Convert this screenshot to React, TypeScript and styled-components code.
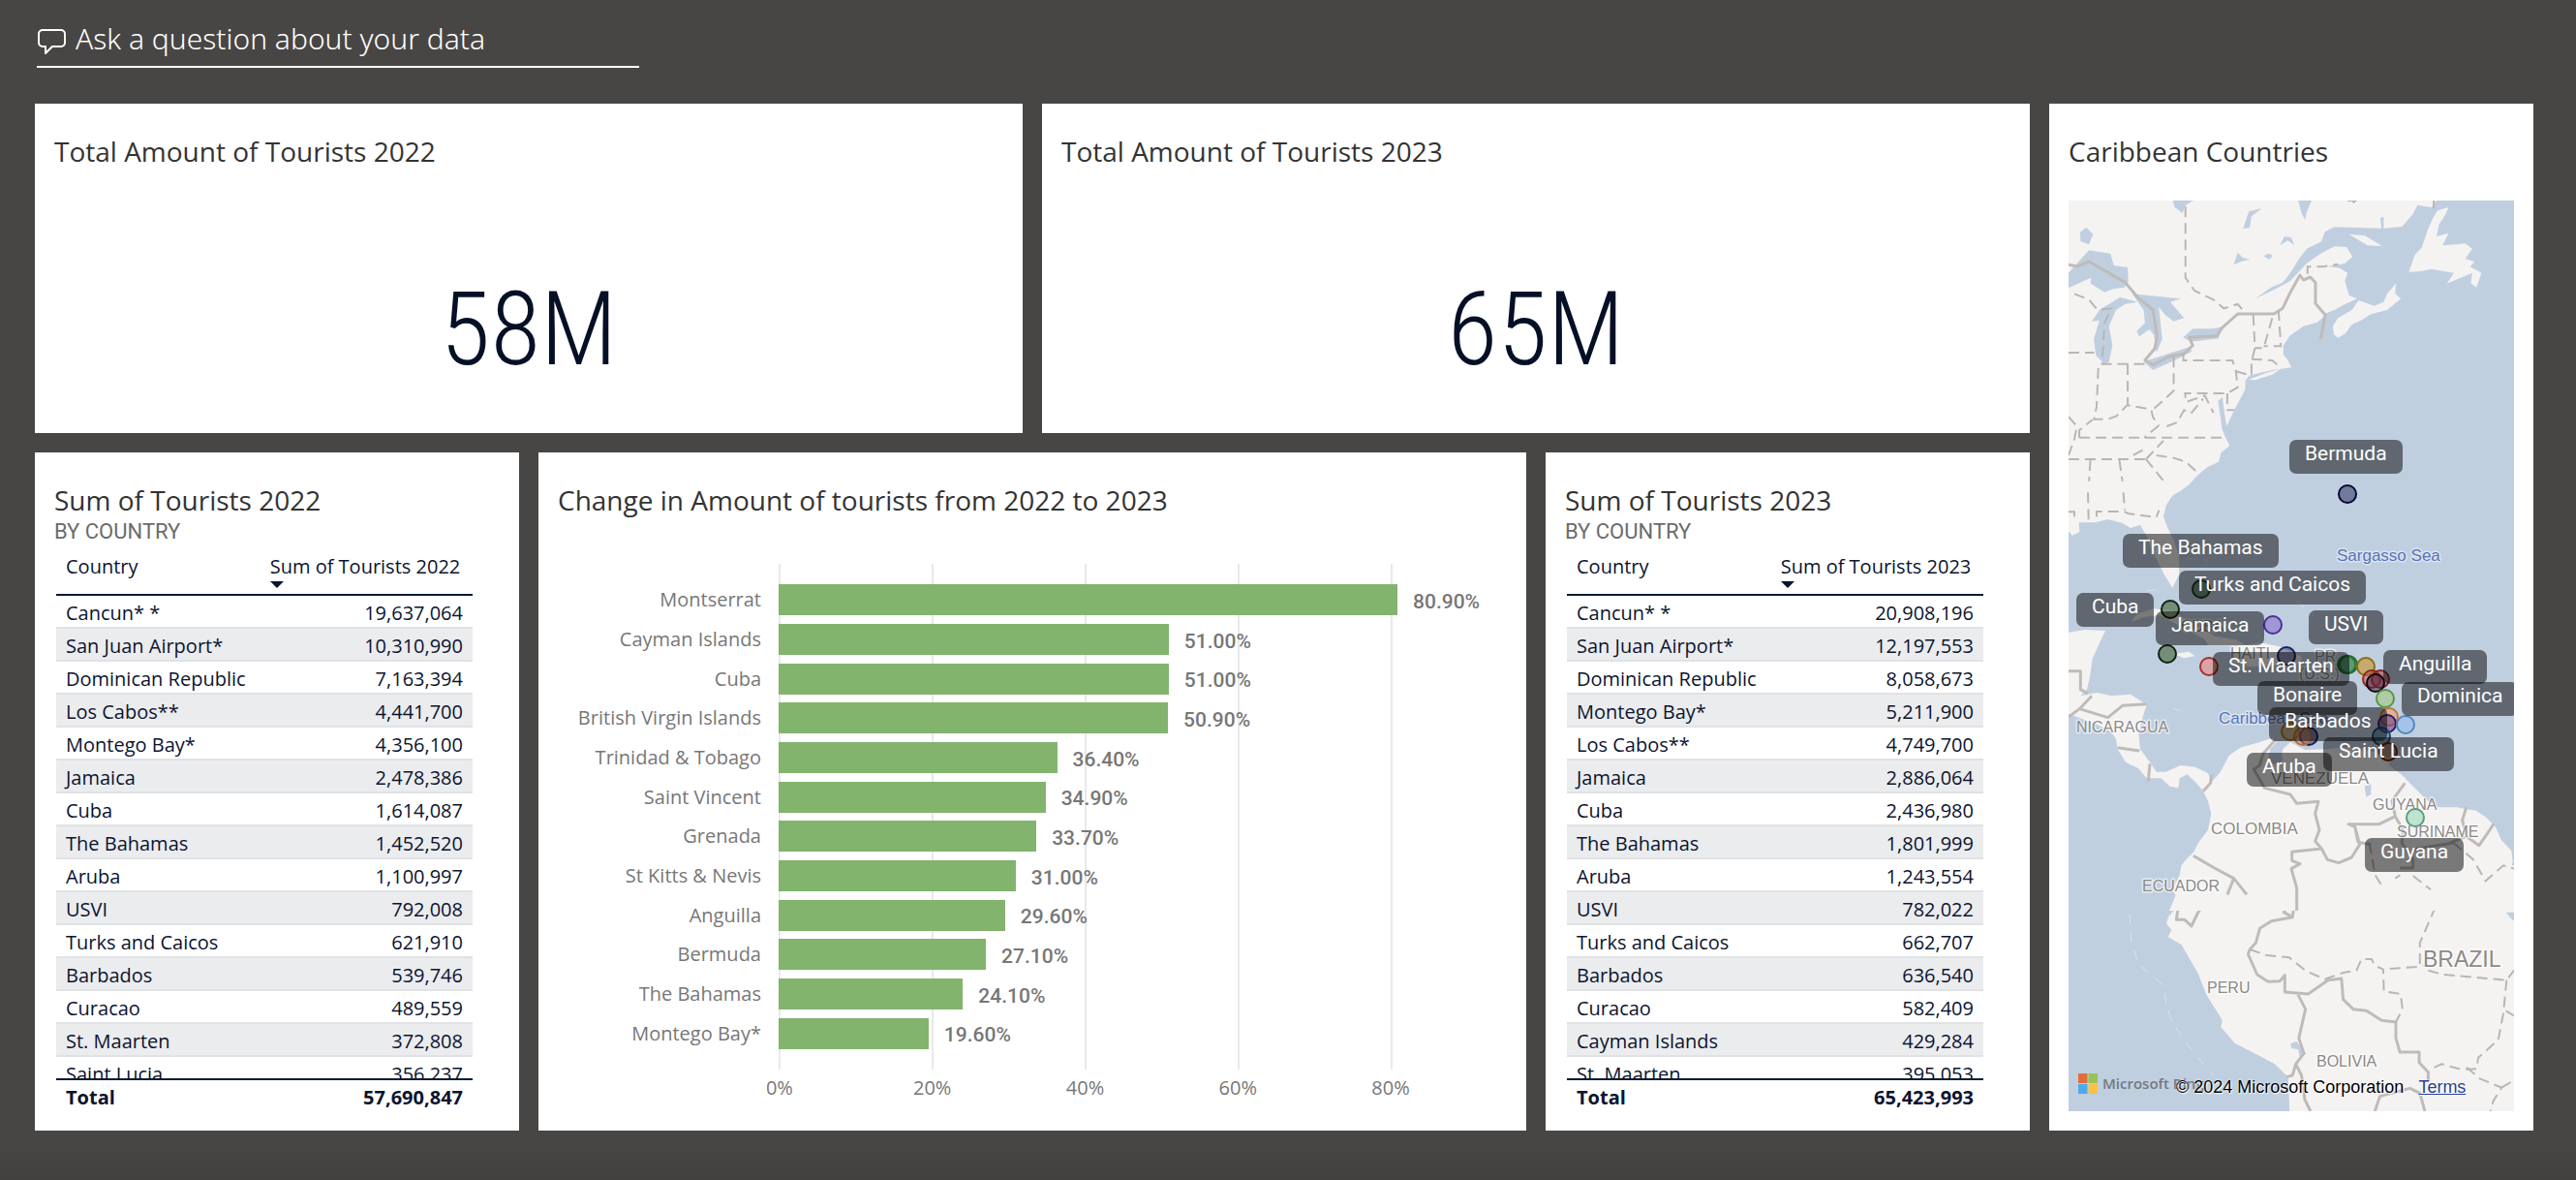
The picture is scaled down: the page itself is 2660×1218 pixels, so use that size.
import React from "react";
import styled, { createGlobalStyle } from "styled-components";

const SANS = `"Segoe UI", "Open Sans", "Noto Sans", sans-serif`;
const SANS_LIGHT = `"Segoe UI Light", "Noto Sans", "Open Sans", sans-serif`;
const DIN = `DIN, Roboto, sans-serif`;
const DIN_LIGHT = `"DIN Light", "Roboto Condensed", Roboto, sans-serif`;
const MAP_FONT = `Helvetica, "Liberation Sans", sans-serif`;

const GlobalStyle = createGlobalStyle`
  *, *::before, *::after { box-sizing: border-box; }
  body { margin: 0; background: #484644; }
`;

const Page = styled.div`
  display: flex;
  flex-direction: column;
  height: 100vh;
  min-height: 900px;
  padding: 20px 44px 51px 36px;
  font-family: ${SANS};
  font-size: 20px;
  background: linear-gradient(to top, #434140, #484644 40px);
`;

const AskBar = styled.form`
  display: flex;
  align-items: center;
  gap: 10px;
  width: min(622px, 100%);
  margin: 0 2px 37px;
  padding-bottom: 8px;
  border-bottom: 2px solid #fff;
`;

const AskIcon = styled.svg`
  flex: none;
  width: 30px;
  height: 30px;
  margin-top: 8px;
`;

const AskInput = styled.input`
  flex: 1;
  min-width: 0;
  height: 40px;
  padding: 0;
  border: 0;
  outline: 0;
  background: transparent;
  color: #fff;
  font: 300 30px/40px ${SANS_LIGHT};
  &::placeholder {
    color: #fff;
    opacity: 1;
  }
`;

const Board = styled.main`
  flex: 1;
  min-height: 0;
  display: grid;
  grid-template-columns: repeat(5, minmax(0, 1fr));
  grid-template-rows: minmax(0, 17fr) minmax(0, 35fr);
  gap: 20px;
`;

const Tile = styled.section<{ $cols?: number; $area?: string }>`
  display: flex;
  flex-direction: column;
  min-width: 0;
  padding: 30px 20px 20px;
  background: #fff;
  grid-column: span ${(p) => p.$cols ?? 1};
  ${(p) => p.$area && `grid-area: ${p.$area};`}
`;

const TileTitle = styled.h2`
  margin: 0;
  color: #333;
  font-size: 28px;
  font-weight: 400;
  line-height: 38px;
  white-space: nowrap;
`;

const TileSubtitle = styled.p`
  margin: 0;
  padding-top: 2px;
  color: #6b6b6b;
  font: 400 22px/24px ${DIN};
`;

const BigNumber = styled.div`
  flex: 1;
  display: flex;
  align-items: center;
  justify-content: center;
  padding-top: 78px;
  color: #051026;
  font: 300 106px/120px ${DIN_LIGHT};
`;

/* ---------- tables ---------- */

const TableScroller = styled.div`
  flex: 1;
  min-height: 0;
  margin: 0 28px 0 2px;
  overflow: auto;
  scrollbar-width: none;
`;

const DataTable = styled.table`
  width: 100%;
  table-layout: fixed;
  border-spacing: 0;
  color: #0b1430;
  line-height: 28px;
`;

const HeadCell = styled.th<{ $wide?: boolean }>`
  position: sticky;
  top: 0;
  width: ${(p) => (p.$wide ? "51%" : "49%")};
  height: 54px;
  padding: 10px 10px 0;
  border-bottom: 2px solid #0b1a33;
  background: #fff;
  font-weight: 400;
  text-align: left;
  vertical-align: top;
  white-space: nowrap;
`;

const SortArrow = styled.span`
  display: block;
  width: 0;
  margin-top: 1px;
  border: 7px solid transparent;
  border-top-color: #0b1430;
  border-bottom: 0;
`;

const BodyRow = styled.tr`
  &:nth-child(even) {
    background: #ebecee;
  }
`;

const Cell = styled.td<{ $num?: boolean }>`
  padding: 4px 10px 0;
  border-bottom: 2px solid #e1e2e6;
  text-align: ${(p) => (p.$num ? "right" : "left")};
  white-space: nowrap;
`;

const TotalCell = styled.td<{ $num?: boolean }>`
  position: sticky;
  bottom: 0;
  padding: 4px 10px 0;
  border-top: 2px solid #0b1a33;
  background: #fff;
  font-weight: 700;
  text-align: ${(p) => (p.$num ? "right" : "left")};
`;

type Row = [string, string];

const rows2022: Row[] = [
  ["Cancun* *", "19,637,064"],
  ["San Juan Airport*", "10,310,990"],
  ["Dominican Republic", "7,163,394"],
  ["Los Cabos**", "4,441,700"],
  ["Montego Bay*", "4,356,100"],
  ["Jamaica", "2,478,386"],
  ["Cuba", "1,614,087"],
  ["The Bahamas", "1,452,520"],
  ["Aruba", "1,100,997"],
  ["USVI", "792,008"],
  ["Turks and Caicos", "621,910"],
  ["Barbados", "539,746"],
  ["Curacao", "489,559"],
  ["St. Maarten", "372,808"],
  ["Saint Lucia", "356,237"],
];

const rows2023: Row[] = [
  ["Cancun* *", "20,908,196"],
  ["San Juan Airport*", "12,197,553"],
  ["Dominican Republic", "8,058,673"],
  ["Montego Bay*", "5,211,900"],
  ["Los Cabos**", "4,749,700"],
  ["Jamaica", "2,886,064"],
  ["Cuba", "2,436,980"],
  ["The Bahamas", "1,801,999"],
  ["Aruba", "1,243,554"],
  ["USVI", "782,022"],
  ["Turks and Caicos", "662,707"],
  ["Barbados", "636,540"],
  ["Curacao", "582,409"],
  ["Cayman Islands", "429,284"],
  ["St. Maarten", "395,053"],
];

function TouristTable({ year, rows, total }: { year: number; rows: Row[]; total: string }) {
  return (
    <Tile>
      <TileTitle>Sum of Tourists {year}</TileTitle>
      <TileSubtitle>BY COUNTRY</TileSubtitle>
      <TableScroller>
        <DataTable>
          <thead>
            <tr>
              <HeadCell scope="col">Country</HeadCell>
              <HeadCell scope="col" $wide aria-sort="descending">
                Sum of Tourists {year}
                <SortArrow />
              </HeadCell>
            </tr>
          </thead>
          <tbody>
            {rows.map(([country, count]) => (
              <BodyRow key={country}>
                <Cell>{country}</Cell>
                <Cell $num>{count}</Cell>
              </BodyRow>
            ))}
          </tbody>
          <tfoot>
            <tr>
              <TotalCell>Total</TotalCell>
              <TotalCell $num>{total}</TotalCell>
            </tr>
          </tfoot>
        </DataTable>
      </TableScroller>
    </Tile>
  );
}

/* ---------- bar chart ---------- */

const AXIS_MAX = 95.2;
const LABEL_COLUMN = "228px";

const changes: [string, number][] = [
  ["Montserrat", 80.9],
  ["Cayman Islands", 51],
  ["Cuba", 51],
  ["British Virgin Islands", 50.9],
  ["Trinidad & Tobago", 36.4],
  ["Saint Vincent", 34.9],
  ["Grenada", 33.7],
  ["St Kitts & Nevis", 31],
  ["Anguilla", 29.6],
  ["Bermuda", 27.1],
  ["The Bahamas", 24.1],
  ["Montego Bay*", 19.6],
];

const ticks = [0, 20, 40, 60, 80];
const share = (v: number) => `${(v / AXIS_MAX) * 100}%`;

const Chart = styled.div`
  flex: 1;
  min-height: 0;
  display: grid;
  grid-template-columns: ${LABEL_COLUMN} minmax(0, 1fr);
  grid-template-rows: minmax(0, 1fr) 43px;
  margin-top: 47px;
  color: #777;
`;

const GridLines = styled.div`
  grid-area: 1 / 2;
  display: flex;
`;

const GridSegment = styled.div`
  flex: none;
  border-left: 2px solid #e9e9e9;
`;

const Bars = styled.div`
  grid-area: 1 / 1 / 2 / 3;
  display: flex;
  flex-direction: column;
  padding: 17px 0;
`;

const BarRow = styled.div`
  flex: 1;
  display: grid;
  grid-template-columns: ${LABEL_COLUMN} minmax(0, 1fr);
  align-items: center;
`;

const BarLabel = styled.span`
  padding-right: 18px;
  line-height: 30px;
  text-align: right;
  white-space: nowrap;
`;

const BarTrack = styled.div`
  display: flex;
  align-items: center;
  gap: 16px;
`;

const Bar = styled.div`
  flex: none;
  height: 32px;
  background: #82b46e;
`;

const BarValue = styled.span`
  padding-top: 3px;
  font: 500 21px/28px ${DIN};
`;

const Ticks = styled.div`
  grid-area: 2 / 2;
  display: flex;
  margin-left: calc(1px - 1000% / ${AXIS_MAX});
  padding-top: 4px;
`;

const Tick = styled.span`
  flex: none;
  line-height: 30px;
  text-align: center;
`;

function ChangeChart() {
  return (
    <Chart>
      <GridLines>
        {ticks.slice(0, -1).map((t) => (
          <GridSegment key={t} style={{ width: share(20) }} />
        ))}
        <GridSegment />
      </GridLines>
      <Bars>
        {changes.map(([name, value]) => (
          <BarRow key={name}>
            <BarLabel>{name}</BarLabel>
            <BarTrack>
              <Bar style={{ width: share(value) }} />
              <BarValue>{value.toFixed(2)}%</BarValue>
            </BarTrack>
          </BarRow>
        ))}
      </Bars>
      <Ticks>
        {ticks.map((t) => (
          <Tick key={t} style={{ width: `${(20 / (AXIS_MAX + 10)) * 100}%` }}>
            {t}%
          </Tick>
        ))}
      </Ticks>
    </Chart>
  );
}

/* ---------- map ---------- */

const MapCanvas = styled.div`
  position: relative;
  flex: 1;
  min-height: 0;
  margin-top: 32px;
  overflow: hidden;
  background: #c0cfe0;
`;

const MapArt = styled.svg`
  display: block;
  width: 100%;
  height: 100%;
`;

const Land = styled.path`
  fill: #f5f3f2;
`;

const Water = styled.path`
  fill: #c0cfe0;
`;

const Border = styled.path`
  fill: none;
  stroke: #bfbbb9;
  stroke-width: 3px;
  stroke-linejoin: round;
  vector-effect: non-scaling-stroke;
`;

const StateLine = styled.path`
  fill: none;
  stroke: #b9b6b2;
  stroke-width: 2px;
  stroke-dasharray: 11 6;
  vector-effect: non-scaling-stroke;
`;

const Reef = styled.path`
  fill: none;
  stroke: #dbe2eb;
  stroke-width: 1px;
  stroke-dasharray: 10 9;
  vector-effect: non-scaling-stroke;
`;

const PlaceName = styled.text<{ $size?: number; $sea?: boolean }>`
  font: 400 ${(p) => p.$size ?? 16}px ${MAP_FONT};
  fill: ${(p) => (p.$sea ? "#5673ba" : "#8b8a89")};
  stroke: ${(p) => (p.$sea ? "#dbe3ee" : "rgba(255, 255, 255, 0.6)")};
  stroke-width: 3px;
  stroke-linejoin: round;
  paint-order: stroke;
`;

const PinLabel = styled.span<{ $x: number; $y: number }>`
  position: absolute;
  left: ${(p) => p.$x}px;
  top: ${(p) => p.$y}px;
  height: 35px;
  padding: 0 16px;
  border-radius: 7px;
  background: rgba(0, 0, 0, 0.5);
  color: #fff;
  font: 400 21px/28px ${DIN};
  white-space: nowrap;
`;

const BingMark = styled.div`
  position: absolute;
  left: 10px;
  bottom: 18px;
  display: flex;
  align-items: center;
  gap: 5px;
  color: #737980;
  font-size: 15px;
  font-weight: 600;
  line-height: 21px;
`;

const BingLogo = styled.svg`
  width: 20px;
  height: 21px;
`;

const Attribution = styled.div`
  position: absolute;
  left: 111px;
  bottom: 14px;
  display: flex;
  gap: 15px;
  color: #000;
  font: 18px/21px ${MAP_FONT};
  white-space: nowrap;
  text-shadow: 1px 1px 1px #fff, 0 0 2px #fff;
`;

const TermsLink = styled.a`
  color: #263f92;
`;

const places: { x: number; y: number; name: string; size?: number; sea?: boolean }[] = [
  { x: 277, y: 372, name: "Sargasso Sea", size: 17, sea: true },
  { x: 155, y: 540, name: "Caribbean Sea", size: 17, sea: true },
  { x: 116, y: 445, name: "CUBA" },
  { x: 167, y: 473, name: "HAITI" },
  { x: 254, y: 476, name: "PR" },
  { x: 238, y: 494, name: "(U.S.)" },
  { x: 8, y: 549, name: "NICARAGUA" },
  { x: 147, y: 654, name: "COLOMBIA", size: 17 },
  { x: 209, y: 602, name: "VENEZUELA", size: 17 },
  { x: 314, y: 629, name: "GUYANA" },
  { x: 339, y: 657, name: "SURINAME" },
  { x: 76, y: 713, name: "ECUADOR" },
  { x: 143, y: 818, name: "PERU" },
  { x: 256, y: 894, name: "BOLIVIA" },
  { x: 366, y: 791, name: "BRAZIL", size: 23 },
];

const pins: [number, number, string, string][] = [
  [288, 303, "#20265a", "#06082c"],
  [137, 401, "#2c5a1c", "#1c3a10"],
  [105, 422, "#284d14", "#0d230a"],
  [102, 468, "#284d14", "#0d230a"],
  [211, 438, "#8260cc", "#4b2f94"],
  [225, 470, "#2a3275", "#1b2258"],
  [145, 481, "#f67766", "#a33030"],
  [287, 479, "#3a8a48", "#226b33"],
  [289, 479, "#3a8a48", "#226b33"],
  [307, 481, "#ca8800", "#8f6d10"],
  [313, 494, "#c65040", "#8c2a20"],
  [322, 494, "#b03030", "#8a1f28"],
  [317, 498, "#402040", "#0a060c"],
  [327, 514, "#9cc76a", "#5b9440"],
  [331, 533, "#f89756", "#c0743c"],
  [329, 540, "#5a3080", "#33186b"],
  [348, 541, "#86b9f0", "#5585bd"],
  [323, 553, "#3a6a9a", "#1d4770"],
  [330, 569, "#8a3a10", "#5a240c"],
  [229, 548, "#ca9a30", "#9b7a1c"],
  [248, 553, "#243080", "#141c5a"],
  [242, 553, "#e88a50", "#b86c38"],
  [358, 637, "#8ad4b0", "#5b9c7e"],
];

const pinLabels: [number, number, string][] = [
  [228, 247, "Bermuda"],
  [56, 344, "The Bahamas"],
  [114, 382, "Turks and Caicos"],
  [8, 405, "Cuba"],
  [90, 424, "Jamaica"],
  [248, 423, "USVI"],
  [149, 466, "St. Maarten"],
  [325, 464, "Anguilla"],
  [195, 496, "Bonaire"],
  [344, 497, "Dominica"],
  [207, 523, "Barbados"],
  [263, 554, "Saint Lucia"],
  [184, 570, "Aruba"],
  [306, 658, "Guyana"],
];

function NorthAmerica() {
  return (
    <g transform="matrix(0.35714 0 0 0.33333 -36.07 -117)">
      <Land d="M101 351H1165L1150 372 1110 365 1095 395 1065 432 1010 437 870 433 842 448 832 478 790 500 768 530 742 575 720 605 690 618 640 655 700 625 742 600 790 545 830 515 870 493 905 495 922 525 900 546 850 555 885 560 908 575 900 600 912 645 935 655 900 672 870 690 845 700 835 715 820 728 780 740 740 770 722 800 722 828 735 845 745 868 715 872 690 876 650 886 625 892 612 908 612 935 600 960 585 990 570 1022 558 1050 552 1010 546 960 533 972 540 1020 545 1060 555 1085 567 1110 542 1132 535 1160 500 1178 470 1205 450 1230 425 1250 405 1262 370 1300H101Z" />
      <Land d="M865 740L880 715 920 690 940 660 985 677 1012 665 1022 640 1047 608 1046 640 1062 655 1022 690 975 703 950 720 920 735 902 762 880 776 868 765Z" />
      <Land d="M1085 572L1102 520 1123 495 1140 440 1155 405 1168 382 1200 372 1190 395 1172 425 1165 462 1200 452 1182 490 1248 484 1268 500 1248 532 1275 540 1262 556 1295 575 1280 620 1264 606 1268 575 1240 588 1195 608 1215 575 1150 563 1120 570Z" />
      <Land d="M912 455L958 460 1008 492 965 490Z" />
      <Land d="M622 905L680 882 715 872 690 890 640 907Z" />
      <Water d="M101 575L130 540 160 505 222 515 232 552 272 558 274 602 262 620 230 625 205 635 165 608 165 590 101 622Z" />
      <Water d="M205 858L180 830 174 780 190 722 168 725 190 690 250 650 300 665 265 672 238 690 218 740 228 800 218 850Z" />
      <Water d="M285 640L425 655 395 665 435 715 405 725 380 705 362 680 372 780 355 822 348 768 335 750 305 772 298 755 322 730 318 690Z" />
      <Water d="M318 850L345 876 400 850 458 818 450 805 390 825Z" />
      <Water d="M432 775L460 748 515 748 545 742 535 778 455 788Z" />
      <Water d="M402 351H462L440 365 430 390 408 372Z" />
      <Water d="M134 450L152 434 172 455 160 487 136 478Z" />
      <Water d="M660 375L630 400 625 435 606 438 622 385Z" />
      <Water d="M765 351H804L790 385 785 412 775 390Z" />
      <Water d="M712 490L725 462 745 465 754 490 735 475Z" />
      <Water d="M578 550L590 512 605 528 625 533 600 540Z" />
      <Water d="M665 522L680 515 692 522 680 534Z" />
      <Water d="M1002 405L1012 402 1012 438 1006 438Z" />
      <Border d="M101 550L125 555 160 540 265 605 285 630 300 650 345 690 357 770 350 810 322 845 345 860 390 835 435 825 460 800 450 775 530 770 545 745 590 702 695 702 720 685 740 640 770 582 780 597 800 588 815 605 815 670 843 705 830 780" />
      <StateLine d="M439 370V590L465 630 520 658 550 685 590 672 605 690M792 578V556H835L880 548M908 351L930 352 912 366M1157 351V375" />
      <StateLine d="M118 640L160 658 185 690 225 685 205 730 198 855M101 822H175M195 857H330M187 870L182 990 175 1028 215 1028 240 1018 270 985M272 858V985L340 998 345 1022 362 1048" />
      <StateLine d="M405 835V940L380 965 345 998M433 825V846H575L585 880 590 930 560 948H438L440 975 495 955 520 1008M635 705L640 808 630 850V895M690 715L665 808H640M708 690L715 802H665M630 842L690 846 705 860M585 880L620 890M560 948V1000H580" />
      <StateLine d="M132 1085H555M132 1085V1062L170 1030M101 1152H325M325 1152L375 1095M288 1140L330 1115M325 1152L380 1225 385 1260M355 1140L405 1148 440 1160 480 1200M164 1155L158 1260M248 1155L262 1260M362 1048L320 1085M385 1050L415 1038 435 1000 455 1010 490 965M101 1020L125 1050 118 1090 101 1140" />
    </g>
  );
}

function Caribbean() {
  return (
    <g transform="matrix(0.33333 0 0 0.33333 -16 223)">
      <Land d="M48 200H402L374 238 350 275 342 310 355 345 375 385 390 430 390 490 370 530 345 490 325 450 300 400 290 370 270 335 240 345 215 330 170 318 130 328 80 328 82 358 60 368 48 355Z" />
      <Land d="M242 635L260 612 310 595 372 602 430 640 500 680 565 690 602 710 480 708 470 690 420 662 330 615 285 620Z" />
      <Land d="M550 715L640 700 700 712 772 745 765 765 700 770 610 775 560 760Z" />
      <Land d="M802 765H860L858 785 805 786ZM375 735L420 728 440 742 405 748Z" />
      <StateLine d="M48 295H66V315M135 310V294H220L232 300 320 312 328 290M218 235L222 290M108 235L110 320" />
      <Reef d="M410 440L480 445M755 570L810 620M290 540L330 535" />
    </g>
  );
}

function CentralAmerica() {
  return (
    <g transform="matrix(0.33333 0 0 0.33333 -16 433)">
      <Land d="M48 38L100 30 162 33 142 75 122 120 115 170 105 215 85 235 135 225 180 235 240 230 290 262 278 300 265 350 270 400 300 440 320 470 350 470 395 450 440 455 480 475 492 500 518 472 545 420 580 395 640 378 680 365 695 375 672 400 668 440 700 450 712 400 735 378 780 402 850 400 900 395 960 400 1000 410 1048 428 1040 450 1075 475 1110 510 1150 550 1185 580 1250 580 1310 590 1340 610 1370 640 1388 680 1420 715 1424 752 1402 762 1428 775V900H360L385 840 390 800 398 765 430 730 450 690 480 650 490 600 480 560 465 530 440 500 415 478 392 490 388 520 362 515 335 490 290 490 265 460 225 440 200 400 195 370 180 345 130 320 80 302 48 290Z" />
      <Water d="M668 415L685 395 705 400 712 435 690 445 672 440ZM965 515L985 505 985 540 970 548Z" />
      <Land d="M1075 490L1090 485 1092 498 1078 500Z" />
      <Border d="M48 158H85V215L108 228M48 300L82 275 120 235M82 275L170 302 215 265 290 260M200 395L268 405M300 445L295 500M490 480L488 505 465 530" />
      <Border d="M690 370L650 415 640 450 622 462 655 520 735 540 755 568 822 562 812 600 825 650 812 685 832 708 740 718V745L765 755 738 770 755 830V900" />
      <Border d="M832 708L850 742 885 752 925 735 950 695 935 640 915 632 1010 632 1060 608 1050 560 1090 505M1060 608L1085 650 1080 690 1115 740V768H1075M1280 580L1268 620 1280 670 1230 690M1280 670L1320 698 1365 632M1115 710L1180 700 1240 690M935 640L945 688 985 695" />
      <Border d="M435 730L500 768 560 800 600 850M560 800L540 850" />
      <StateLine d="M980 690L998 790 1020 825M1060 800L1075 790M1115 792L1170 835M1240 690L1300 740 1340 808 1395 760 1428 770" />
      <Reef d="M375 275L395 280M330 80L345 90" />
    </g>
  );
}

function SouthAmerica() {
  return (
    <g transform="matrix(0.34435 0 0 0.33333 -16 673)">
      <Land d="M400 20L385 40 380 70 360 110 365 130 390 145 370 170 345 200 340 220 355 240 345 262 385 285 410 330 435 375 460 440 490 490 508 520 503 540 545 590 610 625 665 655 705 695 710 815H1390V0H420Z" />
      <Water d="M712 592L730 585 758 622 740 632 735 610 715 606ZM1030 92L1055 95 1068 122 1045 115ZM1358 185H1390V210H1378ZM1374 0H1390V40H1378Z" />
      <Border d="M420 5L475 45 510 45 545 65 570 80 610 135 650 140 690 135 712 148 692 185 718 200 732 95 712 60V35L742 30 720 12V0M545 65V90L505 138 455 158 435 185 415 228 395 208 370 208 375 172M718 200L655 212 620 235 608 280 590 300 585 315 612 378 645 400 680 398 695 380V432L765 438 825 395 865 390 870 455 900 485 940 490 985 520 1028 525 1028 575 1040 618H1098V650L1125 680V710M732 435L757 485 737 575 752 622 728 655 718 690 700 695M728 655L745 690 755 765 772 801M965 801L980 755 1070 730 1100 745 1115 801M805 0L825 25 870 30 910 5" />
      <StateLine d="M590 300L640 318 708 325 760 368 815 392 870 372 910 365 925 330H955L965 350 990 362 992 430 1042 438 1048 485 1028 525M1010 360L1095 354 1110 350M1100 345V280L1165 125 1085 75 1080 50M1125 365L1170 378 1360 395 1382 365M1360 395L1350 500 1335 580 1275 635 1270 670 1225 672 1165 655 1130 672M1240 665L1280 700 1345 728 1320 770 1312 801M1345 728L1382 705M1358 490L1382 505M950 0L988 105 1000 80 1030 85M1240 5L1270 30 1300 90 1350 45 1378 35" />
      <Reef d="M230 190L235 285 260 350 330 410 340 470 355 522 410 605 480 690" />
    </g>
  );
}

function CaribbeanMap() {
  return (
    <MapCanvas>
      <MapArt viewBox="0 0 460 940" preserveAspectRatio="xMinYMin slice" role="img" aria-label="Caribbean map">
        <NorthAmerica />
        <SouthAmerica />
        <CentralAmerica />
        <Caribbean />
        {places.map((p) => (
          <PlaceName key={p.name} x={p.x} y={p.y} $size={p.size} $sea={p.sea}>
            {p.name}
          </PlaceName>
        ))}
        {pins.map(([x, y, fill, stroke], i) => (
          <circle key={i} cx={x} cy={y} r={9} fill={fill} fillOpacity={0.5} stroke={stroke} strokeWidth={2} />
        ))}
      </MapArt>
      {pinLabels.map(([x, y, name]) => (
        <PinLabel key={name} $x={x} $y={y}>
          {name}
        </PinLabel>
      ))}
      <BingMark>
        <BingLogo viewBox="0 0 20 21" aria-hidden="true">
          <path fill="#e66c37" d="M0 0h9.500v10H0z" />
          <path fill="#98c254" d="M10.500 0H20v10h-9.500z" />
          <path fill="#4cabea" d="M0 11h9.500v10H0z" />
          <path fill="#f8c146" d="M10.500 11H20v10h-9.500z" />
        </BingLogo>
        Microsoft Bing
      </BingMark>
      <Attribution>
        <span>© 2024 Microsoft Corporation</span>
        <TermsLink href="#terms">Terms</TermsLink>
      </Attribution>
    </MapCanvas>
  );
}

export default function App() {
  return (
    <>
      <GlobalStyle />
      <Page>
        <AskBar onSubmit={(e) => e.preventDefault()}>
          <AskIcon viewBox="0 0 30 30" fill="none" stroke="#fff" strokeWidth="2" strokeLinejoin="round" aria-hidden="true">
            <path d="M6 2H25a4 4 0 0 1 4 4V15a4 4 0 0 1-4 4H16L9 26V19H6a4 4 0 0 1-4-4V6a4 4 0 0 1 4-4Z" />
          </AskIcon>
          <AskInput aria-label="Ask a question about your data" placeholder="Ask a question about your data" />
        </AskBar>
        <Board>
          <Tile $cols={2}>
            <TileTitle>Total Amount of Tourists 2022</TileTitle>
            <BigNumber>58M</BigNumber>
          </Tile>
          <Tile $cols={2}>
            <TileTitle>Total Amount of Tourists 2023</TileTitle>
            <BigNumber>65M</BigNumber>
          </Tile>
          <Tile $area="1 / 5 / 3 / 6">
            <TileTitle>Caribbean Countries</TileTitle>
            <CaribbeanMap />
          </Tile>
          <TouristTable year={2022} rows={rows2022} total="57,690,847" />
          <Tile $cols={2}>
            <TileTitle>Change in Amount of tourists from 2022 to 2023</TileTitle>
            <ChangeChart />
          </Tile>
          <TouristTable year={2023} rows={rows2023} total="65,423,993" />
        </Board>
      </Page>
    </>
  );
}
